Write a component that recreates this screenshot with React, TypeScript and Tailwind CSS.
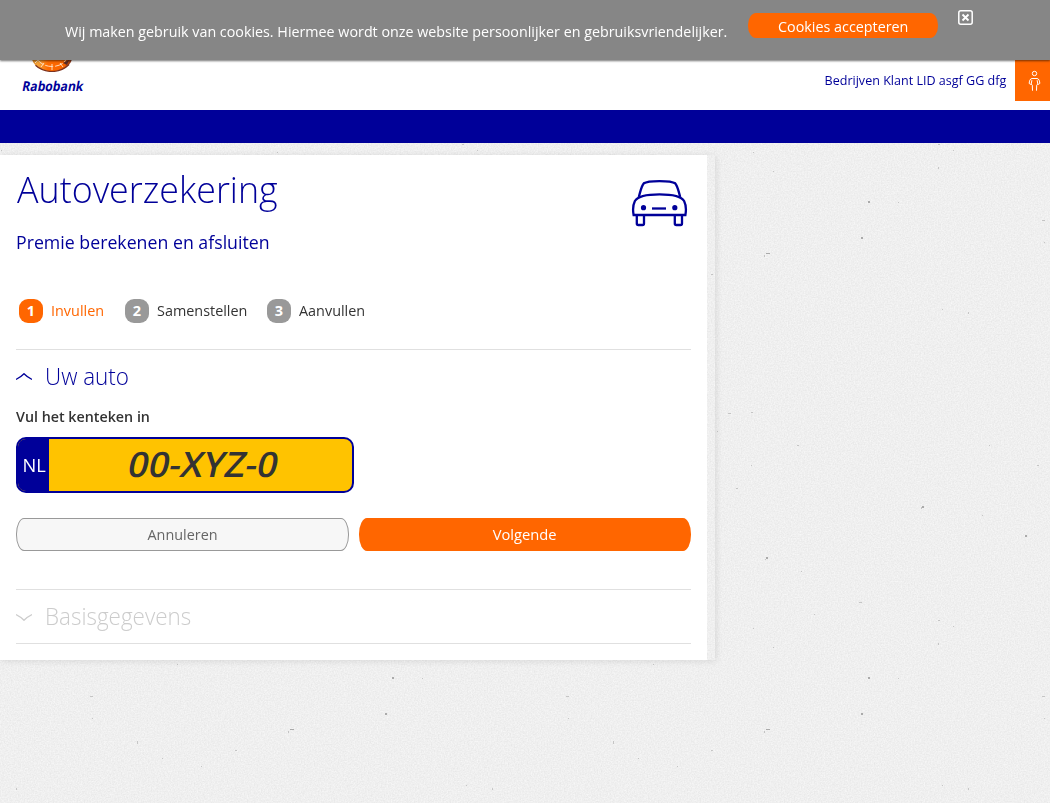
import React from "react";

const SPECKS: [number, number, number, number][] = [
  [728, 413, 3, 1], [751, 412, 2, 1], [717, 431, 1, 1], [797, 445, 2, 1], [989, 445, 1, 1],
  [1037, 465, 2, 1], [736, 488, 2, 1], [751, 465, 1, 1], [922, 506, 2, 2], [921, 507, 1, 2],
  [1025, 535, 2, 2], [766, 557, 2, 2], [765, 559, 1, 1], [801, 571, 1, 1], [859, 602, 3, 1],
  [938, 620, 2, 1], [953, 626, 1, 1], [938, 643, 1, 2], [773, 647, 1, 1], [753, 628, 1, 1],
  [814, 614, 1, 1], [868, 677, 2, 2], [898, 678, 1, 1], [861, 713, 2, 2], [1042, 696, 3, 1],
  [1044, 718, 1, 1], [766, 729, 4, 1], [764, 731, 1, 2], [968, 788, 1, 2], [942, 785, 1, 1],
  [982, 515, 1, 1], [613, 741, 1, 3], [638, 758, 1, 1], [653, 664, 1, 1], [677, 766, 1, 1],
  [711, 750, 2, 1],
];

function Paper() {
  return (
    <svg className="absolute inset-0 h-full w-full" aria-hidden="true">
      <defs>
        <filter id="grain" x="0" y="0" width="100%" height="100%" colorInterpolationFilters="sRGB">
          <feTurbulence type="fractalNoise" baseFrequency="0.7" numOctaves="2" seed="4" />
          <feColorMatrix values="0.09 0 0 0 0.893  0.09 0 0 0 0.893  0.09 0 0 0 0.893  0 0 0 0 1" />
        </filter>
        <pattern id="specks" x="574" y="327" width="476" height="476" patternUnits="userSpaceOnUse">
          {SPECKS.map(([x, y, w, h]) => (
            <rect key={`${x}-${y}`} x={x - 574} y={y - 327} width={w} height={h} fill="#999" fillOpacity={w * h > 3 ? 0.8 : 0.5} />
          ))}
        </pattern>
      </defs>
      <rect width="100%" height="100%" filter="url(#grain)" />
      <rect width="100%" height="100%" fill="url(#specks)" />
    </svg>
  );
}

function CookieBar() {
  return (
    <div className="absolute inset-x-0 top-0 z-10 flex h-15 bg-[#868686] pl-[65px] text-[15px] text-white shadow-[0_1px_2px_rgba(0,0,0,0.55)]">
      <p className="mt-5 w-[683px] origin-left scale-x-[0.953] whitespace-nowrap leading-[22px]">
        Wij maken gebruik van cookies. Hiermee wordt onze website persoonlijker en gebruiksvriendelijker.
      </p>
      <button className="mt-[13px] h-[25px] w-[190px] rounded-[8px/12px] bg-[#ff6600] leading-[27px]">
        <span className="inline-block scale-x-[0.955]">Cookies accepteren</span>
      </button>
      <svg className="mt-[10px] ml-5 h-[15px] w-[15px]" viewBox="0 0 15 15" fill="none" stroke="#fff">
        <rect x="0.8" y="0.8" width="13.4" height="13.4" rx="2" strokeWidth="1.5" />
        <path d="M4.5 4.5l6 6M10.5 4.5l-6 6" strokeWidth="1.9" />
      </svg>
    </div>
  );
}

function Logo() {
  return (
    <div className="flex w-[62px] flex-col items-center">
      <svg className="h-[42px] w-[42px]" viewBox="0 0 42 42">
        <defs>
          <linearGradient id="globe" x1="0" x2="1">
            <stop offset="0" stopColor="#d07a18" />
            <stop offset="0.15" stopColor="#f5a53a" />
            <stop offset="0.4" stopColor="#ff6a00" />
            <stop offset="0.8" stopColor="#f86400" />
            <stop offset="1" stopColor="#6b2a20" />
          </linearGradient>
        </defs>
        <ellipse cx="21" cy="26" rx="20.5" ry="15.5" fill="url(#globe)" />
        <path d="M4.5 35.3Q11 41.5 21 41.5T38 34.5" fill="none" stroke="#7b3322" strokeWidth="1.2" />
        <ellipse cx="21" cy="25" rx="15.5" ry="11.5" fill="none" stroke="#ffe6cf" strokeWidth="0.9" strokeDasharray="8 2" />
        <path d="M21 34v6M13 33l-3 4M29 33l3 4M7 30l-3 3" stroke="#ffe6cf" strokeWidth="0.9" />
        <path d="M32 33l6-3-2 5z" fill="#5a2a28" />
      </svg>
      <span className="mt-[5px] ml-px -skew-x-12 scale-x-[0.9] whitespace-nowrap text-[13.5px] font-bold leading-[19px] text-[#000099]">Rabobank</span>
    </div>
  );
}

function Header() {
  return (
    <header className="relative flex h-[110px] justify-between bg-white pl-[21px]">
      <div className="pt-[30px]"><Logo /></div>
      <div className="flex pt-[60px]">
        <span className="mr-[9px] origin-right scale-x-[0.965] whitespace-nowrap text-[13px] leading-[41px] text-[#000099]">
          Bedrijven Klant LID asgf GG dfg
        </span>
        <div className="flex h-[41px] w-[35px] bg-[#ff6600] pt-[10px] pl-[13px]">
          <svg className="h-[22px] w-[13px]" viewBox="0 0 13 22" fill="none" stroke="#fff" strokeWidth="1">
            <circle cx="6.5" cy="3.5" r="2.2" />
            <path d="M2.9 14.5L1.2 13.5C1.2 11.5 2 8.5 4 8.5h5c2 0 2.8 3 2.8 5l-1.7 1M3.9 10.2L3.2 14l1.1 1.2.2 5.500M9.1 10.2l.7 3.8-1.1 1.2-.2 5.500" />
          </svg>
        </div>
      </div>
    </header>
  );
}

function Car() {
  return (
    <svg className="mt-[24px] h-[49px] w-[57px]" viewBox="0 0 57 49" fill="none" stroke="#000099" strokeWidth="2.3">
      <path d="M7.8 18C9.500 12 10.500 6.500 12.800 4.300C17 1.300 40 1.300 44.200 4.300C46.500 6.500 47.500 12 49.200 18" />
      <path d="M2.600 36C1.700 31 1.900 26 3.900 22C7 16.800 16 15.300 28.500 15.300S50 16.800 53.100 22C55.100 26 55.300 31 54.400 36Z" />
      <path d="M5.800 36V44.500q0 1.500 1.500 1.500H11.500q1.500 0 1.500-1.500V36M43.800 36V44.500q0 1.500 1.500 1.500h4.200q1.500 0 1.500-1.500V36" />
      <path d="M21 29.500h14" />
      <circle cx="12.500" cy="28.700" r="2.600" fill="#000099" stroke="none" />
      <circle cx="43.800" cy="28.700" r="2.600" fill="#000099" stroke="none" />
    </svg>
  );
}

function Step({ n, label, active, className }: { n: number; label: string; active?: boolean; className: string }) {
  return (
    <li className={`flex items-center ${className}`}>
      <span className={`flex h-6 w-6 items-center justify-center rounded-[9px] text-[14.5px] font-bold text-white ${active ? "bg-[#ff6600]" : "bg-[#999999]"}`}>
        {n}
      </span>
      <span className={`ml-2 origin-left scale-x-[0.96] whitespace-nowrap pb-0.5 text-[15px] leading-[22px] ${active ? "text-[#ff6600]" : "text-[#333]"}`}>{label}</span>
    </li>
  );
}

function Section({ title, open, children }: { title: string; open?: boolean; children?: React.ReactNode }) {
  return (
    <section className="border-t border-[#e0e0e0]">
      <h3 className={`flex h-[53px] items-center text-[23.5px] font-light ${open ? "text-[#000099]" : "text-[#ccc]"}`}>
        <svg className="mr-[13px] h-2 w-4" viewBox="0 0 16 8" fill="none" stroke="currentColor" strokeWidth="1.3">
          <path d={open ? "M0 6.5Q5 4 8 0.8Q11 4 16 6.5" : "M0 1.5Q5 4 8 7.2Q11 4 16 1.5"} />
        </svg>
        <span className="origin-left scale-x-[0.955]">{title}</span>
      </h3>
      {children}
    </section>
  );
}

export default function App() {
  return (
    <div className="relative h-[803px] overflow-hidden bg-[#efefef] font-['Open_Sans','Noto_Sans',sans-serif]">
      <Paper />
      <CookieBar />
      <Header />
      <nav className="relative h-[33px] bg-[#000099]" />
      <main className="relative mt-3 flex h-[505px] w-[715px] shadow-[1px_1px_7px_rgba(0,0,0,0.1)]">
        <div className="w-[707px] bg-white px-4">
          <div className="flex h-[144px] justify-between">
            <div>
              <h1 className="mt-[6px] ml-px origin-left scale-x-[0.955] whitespace-nowrap text-[37.5px] font-light leading-[56px] text-[#000099]">Autoverzekering</h1>
              <h2 className="mt-[10px] origin-left scale-x-[0.97] whitespace-nowrap text-[18.3px] leading-[30px] text-[#000099]">Premie berekenen en afsluiten</h2>
            </div>
            <div className="pr-[3px]"><Car /></div>
          </div>
          <ol className="flex h-[50px] items-start pl-[3px]">
            <Step n={1} label="Invullen" active className="w-[106px]" />
            <Step n={2} label="Samenstellen" className="w-[142px]" />
            <Step n={3} label="Aanvullen" className="w-[120px]" />
          </ol>
          <Section title="Uw auto" open>
            <div className="h-[186px]">
              <label className="block h-[34px] origin-left scale-x-[0.985] whitespace-nowrap text-[14.5px] font-semibold leading-[28px] text-[#333]">Vul het kenteken in</label>
              <div className="flex h-14 w-[338px] overflow-hidden rounded-[10px] border-2 border-[#000099] bg-[#ffc300]">
                <span className="flex w-[31px] items-center justify-center bg-[#000099] pl-px text-[19px] text-white"><span className="scale-x-[0.96]">NL</span></span>
                <span className="flex flex-1 items-center justify-center pb-0.5 pl-1.5 text-[35px] font-semibold text-[#333]"><span className="-skew-x-12 scale-x-[1.03]">00-XYZ-0</span></span>
              </div>
              <div className="mt-[25px] flex h-[33px] gap-[10px] text-[15px]">
                <button className="w-[333px] rounded-[8px/16px] border border-[#999] bg-[#f7f7f7] text-[#666]"><span className="inline-block scale-x-[0.96]">Annuleren</span></button>
                <button className="w-[332px] rounded-[8px/16px] bg-[#ff6600] text-white"><span className="inline-block scale-x-[0.98]">Volgende</span></button>
              </div>
            </div>
          </Section>
          <Section title="Basisgegevens" />
          <hr className="border-t border-[#e0e0e0]" />
        </div>
      </main>
    </div>
  );
}
